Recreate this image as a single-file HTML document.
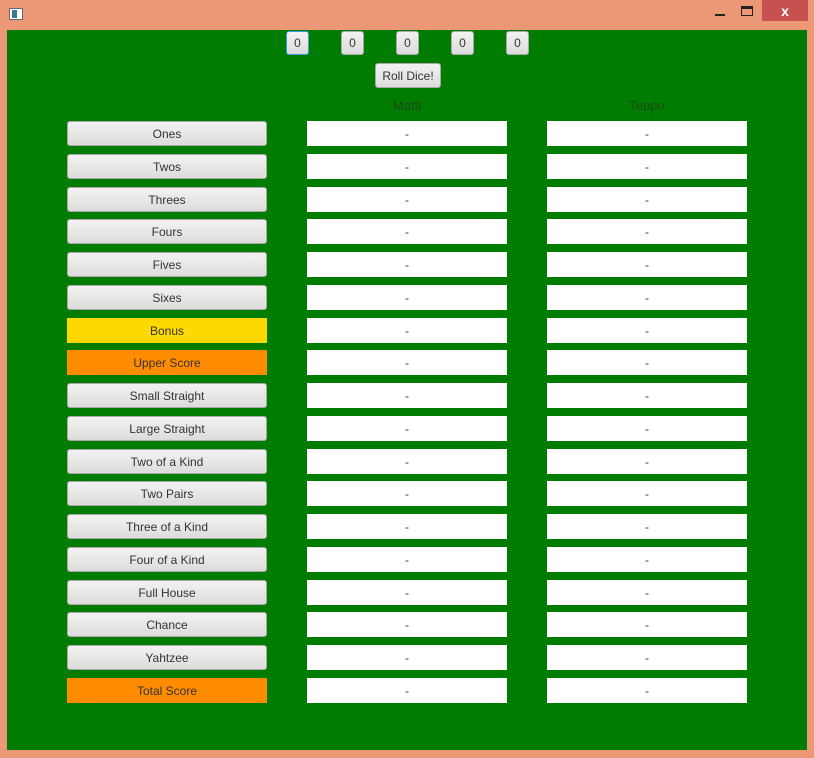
<!DOCTYPE html>
<html><head><style>
*{margin:0;padding:0;box-sizing:border-box}
body{width:814px;height:758px;background:#ec9876;position:relative;overflow:hidden;font-family:"Liberation Sans",sans-serif;font-size:12px;color:#333}
.g{position:absolute;left:7px;top:30px;width:800px;height:720px;background:#007c00}
.a{position:absolute;display:flex;align-items:center;justify-content:center}
.btn{background:linear-gradient(#f2f2f2,#dcdcdc);border:1px solid #a8a8a8;border-radius:3px}
.cell{background:#fff}
.lbl{color:#1a4a1a;font-size:13px}
</style></head><body>
<div class="a" style="left:9px;top:8px;width:14px;height:12px;background:#fff;border:1px solid #667"><div style="width:5px;height:8px;background:#3a7a8a;margin-right:4px"></div></div>
<div style="position:absolute;left:715px;top:14px;width:10px;height:2px;background:#222"></div>
<div style="position:absolute;left:741px;top:6px;width:12px;height:10px;border:1px solid #222;border-top-width:3px"></div>
<div class="a" style="left:762px;top:0;width:46px;height:21px;background:#c75050;color:#fff;font-weight:bold;font-size:14px">x</div>
<div class="g"></div>
<div class="a btn" style="left:286px;top:31px;width:23px;height:24px;border-color:#3c9ae0">0</div>
<div class="a btn" style="left:341px;top:31px;width:23px;height:24px">0</div>
<div class="a btn" style="left:396px;top:31px;width:23px;height:24px">0</div>
<div class="a btn" style="left:451px;top:31px;width:23px;height:24px">0</div>
<div class="a btn" style="left:506px;top:31px;width:23px;height:24px">0</div>
<div class="a btn" style="left:375px;top:63px;width:66px;height:25px">Roll Dice!</div>
<div class="a lbl" style="left:307px;top:96px;width:200px;height:18px">Matti</div>
<div class="a lbl" style="left:547px;top:96px;width:200px;height:18px">Teppo</div>
<div id="rows"></div>
<script>
var n=["Ones","Twos","Threes","Fours","Fives","Sixes","Bonus","Upper Score","Small Straight","Large Straight","Two of a Kind","Two Pairs","Three of a Kind","Four of a Kind","Full House","Chance","Yahtzee","Total Score"];
var h="";
for(var i=0;i<n.length;i++){var t=Math.round(121+i*32.75);
var st=n[i]=="Bonus"?'background:#ffd800':(n[i].indexOf("Score")>0?'background:#ff8c00':'');
h+='<div class="a '+(st?'':'btn')+'" style="left:67px;top:'+t+'px;width:200px;height:25px;'+st+'">'+n[i]+'</div>';
h+='<div class="a cell" style="left:307px;top:'+t+'px;width:200px;height:25px">-</div>';
h+='<div class="a cell" style="left:547px;top:'+t+'px;width:200px;height:25px">-</div>';}
document.getElementById("rows").innerHTML=h;
</script>
</body></html>
